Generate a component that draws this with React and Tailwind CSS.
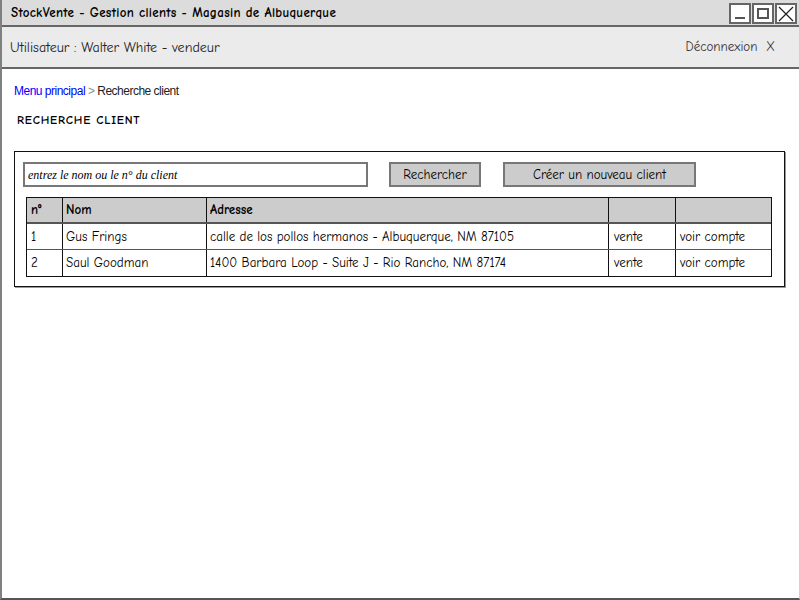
const sketch = { fontFamily: '"Comic Neue", "Noto Sans", "DejaVu Sans", sans-serif' };

const rows = [
  { n: '1', nom: 'Gus Frings', adresse: 'calle de los pollos hermanos - Albuquerque, NM 87105' },
  { n: '2', nom: 'Saul Goodman', adresse: '1400 Barbara Loop - Suite J - Rio Rancho, NM 87174' },
];

const cols = 'grid grid-cols-[36px_144px_402px_67px_1fr]';

export default function App() {
  return (
    <div className="w-[800px] h-[600px] bg-white border-l-2 border-l-[#808080] border-r border-r-[#d0d0d0] border-b-2 border-b-[#555] flex flex-col overflow-hidden" style={sketch}>
      {/* Title bar */}
      <div className="h-[27px] bg-[#dcdcdc] border-b-2 border-b-[#666] flex items-center pl-[9px] pr-[2px]">
        <span className="flex-1 text-[13px] font-bold text-black tracking-[0.3px]">
          StockVente - Gestion clients - Magasin de Albuquerque
        </span>
        <div className="flex gap-[1px] self-start mt-[3px]">
          <div className="w-[22px] h-[21px] border-2 border-[#666] bg-white flex items-end justify-center pb-[3px]">
            <div className="w-[10px] h-[2px] bg-[#555]" />
          </div>
          <div className="w-[22px] h-[21px] border-2 border-[#666] bg-white flex items-center justify-center">
            <div className="w-[12px] h-[11px] border-2 border-[#555]" />
          </div>
          <div className="w-[22px] h-[21px] border-2 border-[#666] bg-white flex items-center justify-center">
            <svg width="16" height="16" viewBox="0 0 16 16" stroke="#222" strokeWidth="1.3" fill="none">
              <path d="M1 1L15 15M15 1L1 15" />
            </svg>
          </div>
        </div>
      </div>

      {/* User bar */}
      <div className="h-[42px] bg-[#ebebeb] border-b-2 border-b-[#666] flex items-center justify-between pl-[8px] pr-[24px] text-[14px] text-[#222]">
        <span>Utilisateur : Walter White - vendeur</span>
        <span className="text-[13px] text-[#333]">Déconnexion&nbsp;&nbsp;X</span>
      </div>

      {/* Content */}
      <div className="px-[12px] pt-[13px]">
        <div className="text-[12px] text-[#222] tracking-[-0.5px]" style={{ fontFamily: '"Liberation Sans", sans-serif' }}>
          <span className="text-[#0000ff]">Menu principal</span>
          <span className="text-[#888]"> &gt; </span>
          Recherche client
        </div>
        <div className="mt-[11px] ml-[3px] text-[12px] font-bold text-black tracking-[0.8px]">RECHERCHE CLIENT</div>

        <div className="mt-[22px] w-[771px] border border-[#111] shadow-[1px_1px_0_#999] px-[8px] pt-[10px] pb-[9px]">
          <div className="flex items-center">
            <div
              className="w-[345px] h-[25px] border-2 border-[#777] bg-white flex items-center px-[3px] text-[12px] italic text-black"
              style={{ fontFamily: '"Liberation Serif", serif' }}
            >
              entrez le nom ou le n° du client
            </div>
            <div className="ml-[21px] w-[92px] h-[25px] border-2 border-[#777] bg-[#cccccc] flex items-center justify-center text-[13px] text-black">
              Rechercher
            </div>
            <div className="ml-[22px] w-[193px] h-[25px] border-2 border-[#777] bg-[#cccccc] flex items-center justify-center text-[13px] text-black">
              Créer un nouveau client
            </div>
          </div>

          <div className="mt-[10px] ml-[3px] w-[746px] border border-[#111] text-[13px] text-black">
            <div className={`${cols} h-[26px] bg-[#cccccc] border-b-2 border-b-[#555] font-bold`}>
              <div className="px-[4px] flex items-center border-r border-[#111]">n°</div>
              <div className="px-[3px] flex items-center border-r border-[#111]">Nom</div>
              <div className="px-[3px] flex items-center border-r border-[#111]">Adresse</div>
              <div className="border-r border-[#111]" />
              <div />
            </div>
            {rows.map((r, i) => (
              <div key={r.n} className={`${cols} h-[26px] ${i === 0 ? 'border-b border-b-[#555]' : ''}`}>
                <div className="px-[4px] flex items-center border-r border-[#111]">{r.n}</div>
                <div className="px-[3px] flex items-center border-r border-[#111]">{r.nom}</div>
                <div className="px-[3px] flex items-center border-r border-[#111]">{r.adresse}</div>
                <div className="px-[5px] flex items-center border-r border-[#111]">vente</div>
                <div className="px-[4px] flex items-center">voir compte</div>
              </div>
            ))}
          </div>
        </div>
      </div>
    </div>
  );
}
